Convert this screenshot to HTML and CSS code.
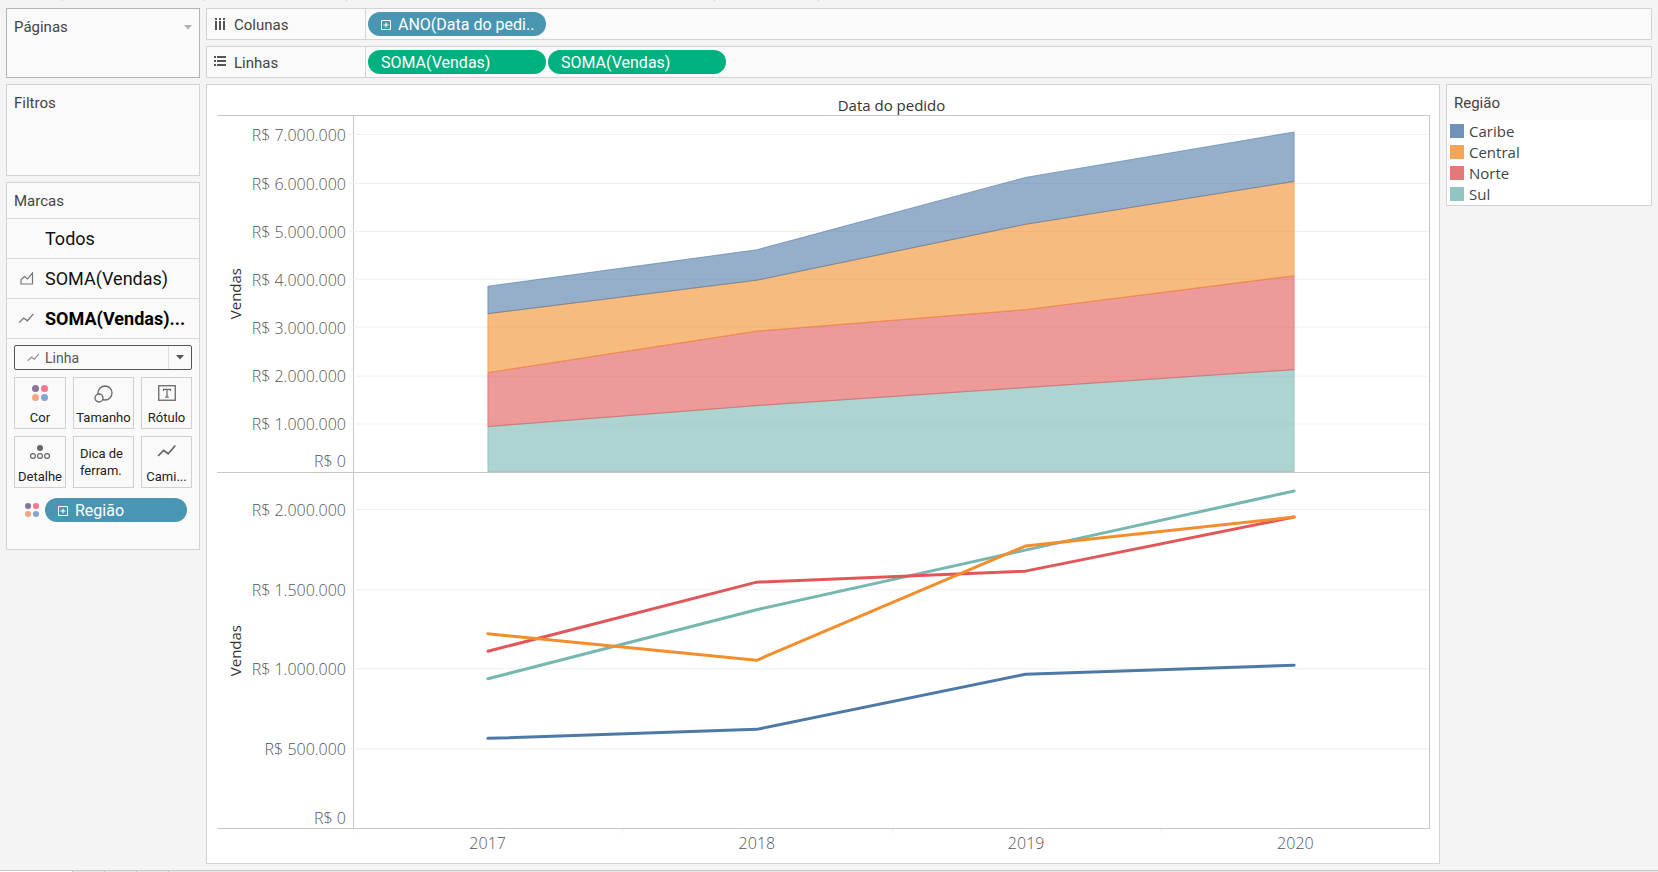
FILE: index.html
```html
<!DOCTYPE html>
<html lang="pt-BR">
<head>
<meta charset="utf-8">
<title>Vendas por região</title>
<link rel="stylesheet" href="styles.css">
</head>
<body>
<svg class="defs" width="0" height="0" aria-hidden="true">
  <symbol id="plus" viewBox="0 0 10 10"><path d="M.5.5h9v9h-9zM5 2.500v5M2.500 5h5" fill="none" stroke="#fff"/></symbol>
  <symbol id="line" viewBox="0 0 18 12"><path d="M1 10.500L6 5.500l4 3 6.500-7.500" fill="none" stroke="currentColor" stroke-width="1.500"/></symbol>
  <symbol id="dots" viewBox="0 0 16 16"><circle cx="3.500" cy="3.500" r="3.500" fill="#8a759b"/><circle cx="12.500" cy="3.500" r="3.500" fill="#f7768a"/><circle cx="3.500" cy="12.500" r="3.500" fill="#f5a67c"/><circle cx="12.500" cy="12.500" r="3.500" fill="#84a5cf"/></symbol>
</svg>
<div class="app">
  <header class="toolbar-edge"><i></i><i></i><i></i><i></i><i></i></header>
  <div class="workspace">
    <aside class="side">
      <section class="card pages">
        <h2>Páginas</h2>
        <svg width="8" height="5" viewBox="0 0 8 5"><path d="M0 0h8L4 4.500z" fill="#b0b0b0"/></svg>
      </section>
      <section class="card filters"><h2>Filtros</h2></section>
      <section class="card marks">
        <h2>Marcas</h2>
        <button class="mark-tab"><span class="tab-icon"></span><span>Todos</span></button>
        <button class="mark-tab"><span class="tab-icon"><svg width="14" height="13" viewBox="0 0 14 13"><path d="M1 12V7.500l3.500-3 3 2.500L12.500 1v11z" fill="none" stroke="currentColor" stroke-width="1.200"/></svg></span><span>SOMA(Vendas)</span></button>
        <button class="mark-tab active"><span class="tab-icon wide"><svg width="17" height="11"><use href="#line"/></svg></span><span>SOMA(Vendas)...</span></button>
        <div class="marks-body">
          <div class="select-wrap">
            <svg class="select-icon" width="13" height="9"><use href="#line"/></svg>
            <select aria-label="Tipo de marca"><option>Linha</option></select>
            <span class="select-arrow"><svg width="8" height="5" viewBox="0 0 8 5"><path d="M0 0h8L4 4.500z" fill="#555"/></svg></span>
          </div>
          <div class="props">
            <button class="prop"><svg width="16" height="16"><use href="#dots"/></svg><span>Cor</span></button>
            <button class="prop"><svg width="20" height="18" viewBox="0 0 20 18"><circle cx="11" cy="8" r="7" fill="none" stroke="#666" stroke-width="1.300"/><circle cx="5" cy="13" r="4" fill="#fafafa" stroke="#666" stroke-width="1.300"/></svg><span>Tamanho</span></button>
            <button class="prop"><svg width="18" height="16" viewBox="0 0 18 16"><rect x=".75" y=".75" width="16.500" height="14.500" fill="none" stroke="#666" stroke-width="1.300"/><path d="M5.500 6V4.300h7V6M9 4.300v7.900M7.200 12.200h3.600" fill="none" stroke="#666" stroke-width="1.200"/></svg><span>Rótulo</span></button>
            <button class="prop"><svg width="20" height="16" viewBox="0 0 20 16"><circle cx="10" cy="4" r="3" fill="#666"/><g fill="none" stroke="#666" stroke-width="1.200"><circle cx="3" cy="12" r="2.400"/><circle cx="10" cy="12" r="2.400"/><circle cx="17" cy="12" r="2.400"/></g></svg><span>Detalhe</span></button>
            <button class="prop tooltip-prop"><span>Dica de ferram.</span></button>
            <button class="prop"><svg width="20" height="14"><use href="#line"/></svg><span>Cami...</span></button>
          </div>
          <div class="encoding">
            <svg width="14" height="14"><use href="#dots"/></svg>
            <button class="pill dimension"><svg width="10" height="10"><use href="#plus"/></svg><span>Região</span></button>
          </div>
        </div>
      </section>
    </aside>
    <main class="main">
      <section class="card shelf">
        <h2><svg width="12" height="13" viewBox="0 0 12 13" fill="#555"><path d="M1 0h2v2H1zM5 0h2v2H5zM9 0h2v2H9zM1 3h2v9H1zM5 3h2v9H5zM9 3h2v9H9z"/></svg><span>Colunas</span></h2>
        <div class="pills"><button class="pill dimension"><svg width="10" height="10"><use href="#plus"/></svg><span>ANO(Data do pedi..</span></button></div>
      </section>
      <section class="card shelf">
        <h2><svg width="12" height="12" viewBox="0 0 12 12" fill="#555"><path d="M0 0h2v2H0zM0 4h2v2H0zM0 8h2v2H0zM3 0h9v2H3zM3 4h9v2H3zM3 8h9v2H3z"/></svg><span>Linhas</span></h2>
        <div class="pills"><button class="pill measure"><span>SOMA(Vendas)</span></button><button class="pill measure"><span>SOMA(Vendas)</span></button></div>
      </section>
      <div class="lower">
        <section class="card viz">
          <h1>Data do pedido</h1>
          <div class="pane">
            <div class="axis-title"><span>Vendas</span></div>
            <svg class="axis" width="100%" height="100%">
              <g class="labels"><text x="101" y="5.300%" dy="6">R$ 7.000.000</text><text x="101" y="19.100%" dy="6">R$ 6.000.000</text><text x="101" y="32.500%" dy="6">R$ 5.000.000</text><text x="101" y="46%" dy="6">R$ 4.000.000</text><text x="101" y="59.500%" dy="6">R$ 3.000.000</text><text x="101" y="73.200%" dy="6">R$ 2.000.000</text><text x="101" y="86.600%" dy="6">R$ 1.000.000</text><text x="101" y="97%" dy="6">R$ 0</text></g>
            </svg>
            <svg class="plot" viewBox="0 0 1076 356" preserveAspectRatio="none">
              <path class="grid" d="M-5 18.500h1081M-5 67.500h1081M-5 115.500h1081M-5 163.500h1081M-5 211.500h1081M-5 260.500h1081M-5 308.500h1081"/>
              <path class="area sul" d="M134 311L403 290 672 272 941 254V356H134z"/>
              <path class="area norte" d="M134 257L403 215.500 672 194 941 160V254L672 272 403 290 134 311z"/>
              <path class="area central" d="M134 198L403 164.500 672 108.500 941 65.500V160L672 194 403 215.500 134 257z"/>
              <path class="area caribe" d="M134 170.500L403 134 672 61.500 941 16V65.500L672 108.500 403 164.500 134 198z"/>
            </svg>
          </div>
          <div class="pane">
            <div class="axis-title"><span>Vendas</span></div>
            <svg class="axis" width="100%" height="100%">
              <g class="labels"><text x="101" y="10.400%" dy="6">R$ 2.000.000</text><text x="101" y="32.900%" dy="6">R$ 1.500.000</text><text x="101" y="55.100%" dy="6">R$ 1.000.000</text><text x="101" y="77.500%" dy="6">R$ 500.000</text><text x="101" y="97%" dy="6">R$ 0</text></g>
            </svg>
            <svg class="plot" viewBox="0 0 1076 355" preserveAspectRatio="none">
              <path class="grid" d="M-5 36.500h1081M-5 116.500h1081M-5 195.500h1081M-5 275.500h1081"/>
              <path class="series sul" d="M134 205.500L403 136.500 672 77 941 18"/>
              <path class="series norte" d="M134 178L403 109 672 98 941 44"/>
              <path class="series central" d="M134 160.500L403 187 672 73 941 44"/>
              <path class="series caribe" d="M134 265L403 256 672 201 941 192"/>
            </svg>
          </div>
          <div class="years"><span>2017</span><span>2018</span><span>2019</span><span>2020</span></div>
        </section>
        <section class="card legend">
          <h2>Região</h2>
          <ul>
            <li><i class="sw caribe"></i>Caribe</li>
            <li><i class="sw central"></i>Central</li>
            <li><i class="sw norte"></i>Norte</li>
            <li><i class="sw sul"></i>Sul</li>
          </ul>
        </section>
      </div>
    </main>
  </div>
  <footer class="sheet-tabs"><i></i><i></i><i></i><i></i></footer>
</div>
</body>
</html>
```
FILE: styles.css
```css
* { box-sizing: border-box; }
body { margin: 0; background: #f4f4f4; color: #444; font-family: "Open Sans", "Noto Sans", sans-serif; font-size: 15px; line-height: 20px; }
h1, h2, ul { margin: 0; padding: 0; }
h1, h2 { font-size: 15px; font-weight: 400; }
button, select { font: inherit; color: inherit; margin: 0; padding: 0; }
svg { display: block; flex: none; }
.defs { position: absolute; }
.app { min-height: 100vh; display: flex; flex-direction: column; }
.toolbar-edge { height: 1px; display: flex; }
.toolbar-edge i { width: 142px; border-right: 1px solid #ccc; }
.toolbar-edge i:first-child { width: 63px; }
.toolbar-edge i:nth-child(4) { width: 368px; }
.toolbar-edge i:last-child { width: 104px; }
.workspace { flex: 1; display: flex; gap: 6px; padding: 7px 6px 6px; }
.card { background: #fafafa; border: 1px solid #d4d4d4; }
.side { flex: none; width: 194px; display: flex; flex-direction: column; gap: 6px; }
.side h2 { padding: 8px 7px 7px; }
.side h2, .shelf h2, .legend h2, .pill, .mark-tab, .prop, select { font-family: Roboto, sans-serif; }
.pages { height: 70px; display: flex; justify-content: space-between; border-color: #b4b4b4; padding-right: 7px; }
.pages svg { margin-top: 16px; }
.filters { height: 92px; }
.marks { height: 368px; }
.mark-tab { width: 100%; height: 40px; display: flex; align-items: center; border: 0; border-top: 1px solid #d9d9d9; background: none; color: #111; font-size: 18px; text-align: left; }
.tab-icon { width: 38px; padding-left: 13px; color: #777; }
.tab-icon.wide { padding-left: 11px; }
.active { font-weight: 700; color: #000; }
.marks-body { border-top: 1px solid #d9d9d9; padding: 6px 7px; }
.select-wrap { height: 25px; display: flex; align-items: center; border: 1px solid #555; border-radius: 2px; padding-left: 12px; font-size: 14px; color: #555; }
.select-icon { color: #888; }
select { flex: 1; min-width: 0; height: 23px; padding-left: 5px; border: 0; background: none; appearance: none; outline: 0; }
.select-arrow { width: 23px; height: 23px; border-left: 1px solid #ddd; display: flex; align-items: center; justify-content: center; }
.props { display: grid; grid-template-columns: 52fr 61fr 51fr; gap: 7px; padding: 7px 0 10px; }
.prop { height: 52px; min-width: 0; display: flex; flex-direction: column; align-items: center; justify-content: space-between; padding: 7px 0 0; border: 1px solid #d0d0d0; background: #fafafa; color: #222; font-size: 13px; line-height: 20px; white-space: nowrap; }
.prop svg { color: #666; }
.tooltip-prop { white-space: normal; line-height: 17px; padding: 0 6px; justify-content: center; text-align: left; }
.encoding { display: flex; align-items: center; gap: 6px; padding: 0 5px 0 11px; }
.encoding .pill { flex: 1; }
.pill { height: 24px; border: 0; border-radius: 12px; padding: 1px 13px 0; color: #fff; display: flex; align-items: center; gap: 7px; white-space: nowrap; font-size: 16px; }
.dimension { background: #4996b2; }
.measure { background: #00b180; }
.main { flex: 1; min-width: 0; display: flex; flex-direction: column; gap: 6px; }
.shelf { height: 32px; display: flex; }
.shelf h2 { width: 159px; display: flex; align-items: center; gap: 8px; padding-left: 7px; border-right: 1px solid #d4d4d4; }
.shelf h2 span { padding-top: 2px; }
.pills { display: flex; align-items: center; gap: 2px; padding-left: 2px; }
.pills .pill { width: 178px; }
.lower { flex: 1; display: flex; gap: 6px; align-items: flex-start; }
.viz { flex: 1; align-self: stretch; min-width: 0; background: #fff; display: flex; flex-direction: column; padding: 0 9px 0 10px; }
.viz h1 { height: 30px; padding-top: 10px; padding-left: 136px; text-align: center; color: #333; }
.pane { flex: 1; min-height: 0; display: grid; grid-template-columns: 35px 101px 1fr; border-top: 1px solid #c8c8c8; }
.pane + .years { border-top: 1px solid #c8c8c8; }
.axis-title { display: flex; align-items: center; justify-content: center; color: #333; }
.axis-title span { writing-mode: vertical-rl; transform: rotate(180deg); }
.axis, .plot { width: 100%; height: 100%; min-height: 0; overflow: visible; }
.labels { text-anchor: end; fill: #555; font-weight: 300; font-size: 16px; transform: translateX(-7px); }
.plot { border: 1px solid #c8c8c8; border-width: 0 1px; }
.grid { fill: none; stroke: #f0f0f0; vector-effect: non-scaling-stroke; }
.area { fill-opacity: .6; stroke-opacity: .6; stroke-width: 1; vector-effect: non-scaling-stroke; }
.series { fill: none; stroke-width: 3; stroke-linecap: round; stroke-linejoin: round; vector-effect: non-scaling-stroke; }
.plot .caribe { stroke: #4e79a7; } .area.caribe { fill: #4e79a7; }
.plot .central { stroke: #f28e2b; } .area.central { fill: #f28e2b; }
.plot .norte { stroke: #e15759; } .area.norte { fill: #e15759; }
.plot .sul { stroke: #76b7b2; } .area.sul { fill: #76b7b2; }
.years { height: 35px; padding-left: 136px; display: grid; grid-template-columns: repeat(4, 1fr); text-align: center; color: #555; font-weight: 300; font-size: 16px; }
.years span { padding-top: 4px; background: linear-gradient(#eee, #eee) left top / 1px 4px no-repeat; }
.legend { width: 206px; height: 122px; background: #fff; }
.legend h2 { height: 35px; padding: 8px 7px; background: #fafafa; }
.legend ul { list-style: none; padding: 0 3px; }
.legend li { height: 21px; display: flex; align-items: center; gap: 5px; }
.sw { width: 14px; height: 14px; }
.sw.caribe { background: #7192b9; }
.sw.central { background: #f5a555; }
.sw.norte { background: #e77878; }
.sw.sul { background: #91c5c1; }
.sheet-tabs { height: 2px; border-top: 1px solid #c8c8c8; display: flex; background: #e6e6e6; }
.sheet-tabs i { width: 32px; border-right: 1px solid #c0c0c0; }
.sheet-tabs i:first-child { width: 73px; background: #fff; }
```
